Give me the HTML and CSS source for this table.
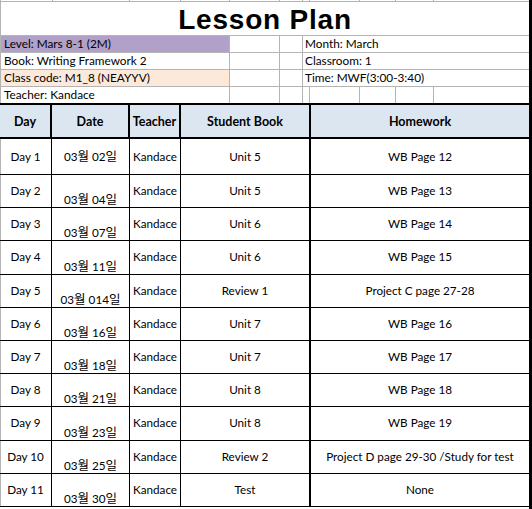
FILE: index.html
```html
<!DOCTYPE html>
<html>
<head>
<meta charset="utf-8">
<link rel="stylesheet" href="styles.css">
</head>
<body>
<div class="sheet">
  <div class="top">
    <div></div><div></div><div></div><div></div><div></div><div></div><div></div><div></div><div></div><div></div><div></div>
    <div class="title">Lesson Plan</div>
    <div class="info span4 purple">Level: Mars 8-1 (2M)</div><div></div><div></div>
    <div class="info span5 right">Month: March</div>
    <div class="info span4">Book: Writing Framework 2</div><div></div><div></div>
    <div class="info span5 right">Classroom: 1</div>
    <div class="info span4 peach">Class code: M1_8 (NEAYYV)</div><div></div><div></div>
    <div class="info span5 right">Time: MWF(3:00-3:40)</div>
    <div class="info span4">Teacher: Kandace</div><div></div><div></div><div></div><div></div><div></div><div></div><div></div>
  </div>
  <div class="plan">
    <div class="h">Day</div>
    <div class="h">Date</div>
    <div class="h">Teacher</div>
    <div class="h">Student Book</div>
    <div class="h last">Homework</div>

    <div class="c day">Day 1</div><div class="c date mid"><span>03<span class="k">월</span> 02<span class="k">일</span></span></div><div class="c tch">Kandace</div><div class="c sb">Unit 5</div><div class="c hw">WB Page 12</div>
    <div class="c day">Day 2</div><div class="c date"><span>03<span class="k">월</span> 04<span class="k">일</span></span></div><div class="c tch">Kandace</div><div class="c sb">Unit 5</div><div class="c hw">WB Page 13</div>
    <div class="c day">Day 3</div><div class="c date"><span>03<span class="k">월</span> 07<span class="k">일</span></span></div><div class="c tch">Kandace</div><div class="c sb">Unit 6</div><div class="c hw">WB Page 14</div>
    <div class="c day">Day 4</div><div class="c date"><span>03<span class="k">월</span> 11<span class="k">일</span></span></div><div class="c tch">Kandace</div><div class="c sb">Unit 6</div><div class="c hw">WB Page 15</div>
    <div class="c day">Day 5</div><div class="c date"><span>03<span class="k">월</span> 014<span class="k">일</span></span></div><div class="c tch">Kandace</div><div class="c sb">Review 1</div><div class="c hw">Project C page 27-28</div>
    <div class="c day">Day 6</div><div class="c date"><span>03<span class="k">월</span> 16<span class="k">일</span></span></div><div class="c tch">Kandace</div><div class="c sb">Unit 7</div><div class="c hw">WB Page 16</div>
    <div class="c day">Day 7</div><div class="c date"><span>03<span class="k">월</span> 18<span class="k">일</span></span></div><div class="c tch">Kandace</div><div class="c sb">Unit 7</div><div class="c hw">WB Page 17</div>
    <div class="c day">Day 8</div><div class="c date"><span>03<span class="k">월</span> 21<span class="k">일</span></span></div><div class="c tch">Kandace</div><div class="c sb">Unit 8</div><div class="c hw">WB Page 18</div>
    <div class="c day">Day 9</div><div class="c date"><span>03<span class="k">월</span> 23<span class="k">일</span></span></div><div class="c tch">Kandace</div><div class="c sb">Unit 8</div><div class="c hw">WB Page 19</div>
    <div class="c day">Day 10</div><div class="c date"><span>03<span class="k">월</span> 25<span class="k">일</span></span></div><div class="c tch">Kandace</div><div class="c sb">Review 2</div><div class="c hw">Project D page 29-30 /Study for test</div>
    <div class="c day">Day 11</div><div class="c date"><span>03<span class="k">월</span> 30<span class="k">일</span></span></div><div class="c tch">Kandace</div><div class="c sb">Test</div><div class="c hw">None</div>
  </div>
</div>
</body>
</html>
```

FILE: styles.css
```css
html, body {
  margin: 0;
  padding: 0;
  background: #fff;
}
body {
  font-family: Lato, "Noto Sans CJK KR", sans-serif;
  color: #000;
}
.sheet {
  width: 529px;
  height: 509px;
  border-right: 3px solid #000;
  overflow: hidden;
}
.top {
  display: grid;
  grid-template-columns: 51px 76px 50px 48px 49px 22px 6px 49px 35px 37px 95px;
  grid-template-rows: 1px 33px 16px 16px 16px 16px;
  gap: 1px;
  padding-left: 1px;
  background: #b4b4b4;
}
.top > div {
  background: #fff;
}
.title {
  grid-column: 1 / -1;
  font-family: "Liberation Sans", Arial, sans-serif;
  font-weight: bold;
  font-size: 28px;
  letter-spacing: 0.8px;
  line-height: 33px;
  padding-top: 1px;
  box-sizing: border-box;
  text-align: center;
}
.info {
  font-size: 11.8px;
  line-height: 16px;
  padding-left: 3px;
  white-space: nowrap;
  overflow: hidden;
}
.info.right {
  padding-left: 2px;
}
.span4 { grid-column: span 4; }
.span5 { grid-column: span 5; }
.top > .purple { background: #b1a0c7; }
.top > .peach { background: #fde9d9; }

.plan {
  display: grid;
  grid-template-columns: 52px 78px 51px 130px 218px;
  grid-template-rows: 34px 36px repeat(10, 33.2px);
  border-top: 2px solid #000;
}
.h {
  box-sizing: border-box;
  background: #dce6f1;
  border-right: 2px solid #000;
  border-bottom: 2px solid #000;
  font-weight: bold;
  font-size: 12.5px;
  display: flex;
  align-items: center;
  justify-content: center;
  white-space: nowrap;
}
.h.last {
  border-right: 0;
}
.c {
  box-sizing: border-box;
  border-right: 1px solid #000;
  border-bottom: 1px solid #000;
  display: flex;
  align-items: center;
  justify-content: center;
  font-size: 11.7px;
  line-height: 16px;
  padding-bottom: 2px;
  white-space: nowrap;
}
.c.day {
  box-shadow: inset 1px 0 #b4b4b4;
}
.c.date {
  align-items: flex-end;
  padding-bottom: 0;
}
.c.date.mid {
  align-items: center;
  padding-bottom: 2px;
}
.k {
  font-family: "Noto Sans CJK KR", sans-serif;
  font-size: 12.5px;
}
.c.tch {
  justify-content: flex-start;
  padding-left: 3px;
}
.c.sb {
  border-right-width: 2px;
}
.c.hw {
  border-right: 0;
}
```
